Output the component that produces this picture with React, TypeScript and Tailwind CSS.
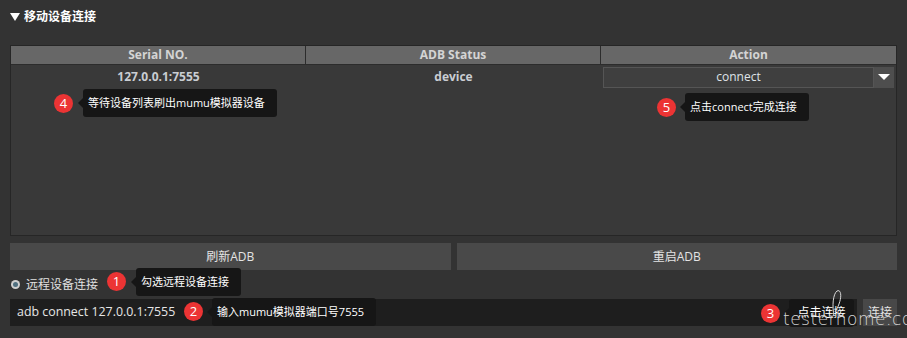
import React from 'react';

const font = { fontFamily: '"Open Sans", "Noto Sans CJK SC", sans-serif' };

function Badge({ n, className }: { n: number; className: string }) {
  return (
    <div
      className={`absolute w-[19px] h-[19px] rounded-full bg-[#ec3434] text-white text-[13px] flex items-center justify-center ${className}`}
    >
      {n}
    </div>
  );
}

function Tip({ text, className }: { text: string; className: string }) {
  return (
    <div className={`absolute h-[28px] bg-[#161616] rounded-[3px] text-white text-[11px] flex items-center pl-[5px] pr-[12px] ${className}`}>
      <span className="absolute left-[-5px] top-[9px] w-0 h-0 border-y-[5px] border-y-transparent border-r-[5px] border-r-[#161616]" />
      {text}
    </div>
  );
}

export default function App() {
  const cols = ['Serial NO.', 'ADB Status', 'Action'];
  return (
    <div className="relative w-[907px] h-[338px] bg-[#333333] overflow-hidden text-[#d8d8d8]" style={font}>
      <div className="h-[45px] px-[10px] pt-[9px] flex items-start gap-[4px]">
        <div className="flex items-center h-[16px] gap-[4px]">
          <span className="w-0 h-0 border-x-[5px] border-x-transparent border-t-[8px] border-t-white" />
          <span className="text-[12px] font-bold text-white">移动设备连接</span>
        </div>
      </div>

      <div className="mx-[10px] h-[191px] border border-[#262626] bg-[#393939] flex flex-col">
        <div className="grid grid-cols-3 h-[19px] bg-[#676767] border-b border-[#2c2c2c]">
          {cols.map((c, i) => (
            <div
              key={c}
              className={`flex items-center justify-center text-[12px] font-bold text-[#d4d4d4] ${i < 2 ? 'border-r border-[#2c2c2c]' : ''}`}
            >
              {c}
            </div>
          ))}
        </div>
        <div className="grid grid-cols-3 h-[24px] items-center text-[12px] font-bold text-[#c9cdd2]">
          <div className="text-center">127.0.0.1:7555</div>
          <div className="text-center">device</div>
          <div className="flex h-[21px] pl-[2px] pr-[2px]">
            <div className="flex-1 bg-[#3f3f3f] border border-[#555] flex items-center justify-center font-normal text-[#dfe3e8]">
              connect
            </div>
            <div className="w-[20px] bg-[#4e4e4e] flex items-center justify-center">
              <span className="w-0 h-0 border-x-[6px] border-x-transparent border-t-[6px] border-t-white" />
            </div>
          </div>
        </div>
      </div>

      <div className="mt-[7px] mx-[10px] flex gap-[6px] h-[27px]">
        <button className="flex-1 bg-[#494949] text-[12px] text-[#e4e4e4]">刷新ADB</button>
        <button className="flex-1 bg-[#494949] text-[12px] text-[#e4e4e4]">重启ADB</button>
      </div>

      <div className="h-[29px] pl-[11px] flex items-center gap-[6px]">
        <span className="w-[9px] h-[9px] rounded-full bg-[#cfcfcf] flex items-center justify-center">
          <span className="w-[5px] h-[5px] rounded-full bg-[#4f6f7f]" />
        </span>
        <span className="text-[12px] text-[#e0e0e0]">远程设备连接</span>
      </div>

      <div className="mx-[10px] flex gap-[6px] h-[27px]">
        <div className="flex-1 bg-[#1e1e1e] flex items-center pl-[7px] text-[12.4px] text-[#e6e6e6]">
          adb connect 127.0.0.1:7555
        </div>
        <button className="w-[34px] bg-[#484848] text-[12px] text-[#e4e4e4]">连接</button>
      </div>

      <Badge n={4} className="left-[54px] top-[94px]" />
      <Tip text="等待设备列表刷出mumu模拟器设备" className="left-[83px] top-[89px]" />
      <Badge n={5} className="left-[657px] top-[98px]" />
      <Tip text="点击connect完成连接" className="left-[685px] top-[93px]" />
      <Badge n={1} className="left-[107px] top-[272px]" />
      <Tip text="勾选远程设备连接" className="left-[136px] top-[268px] h-[26px]" />
      <Badge n={2} className="left-[184px] top-[302px]" />
      <Tip text="输入mumu模拟器端口号7555" className="left-[212px] top-[298px]" />
      <Badge n={3} className="left-[761px] top-[304px]" />
      <Tip text="点击连接" className="left-[789px] top-[299px] w-[65px] !px-0 justify-center text-[12px]" />

      {/* watermark */}
      <svg className="absolute left-[830px] top-[288px] pointer-events-none" width="14" height="30" viewBox="0 0 14 30">
        <path d="M4 28 C2 18 3 6 7 3 C11 1 12 8 9 16 C8 19 6 22 5 24" fill="none" stroke="#d8d8d8" strokeWidth="1" />
      </svg>
      <div
        className="absolute left-[783px] top-[307px] text-[17px] text-[#d6d6d6] tracking-[0.5px] pointer-events-none"
        style={{ fontFamily: '"DejaVu Sans", sans-serif', fontWeight: 200 }}
      >
        testerhome.com
      </div>
    </div>
  );
}
